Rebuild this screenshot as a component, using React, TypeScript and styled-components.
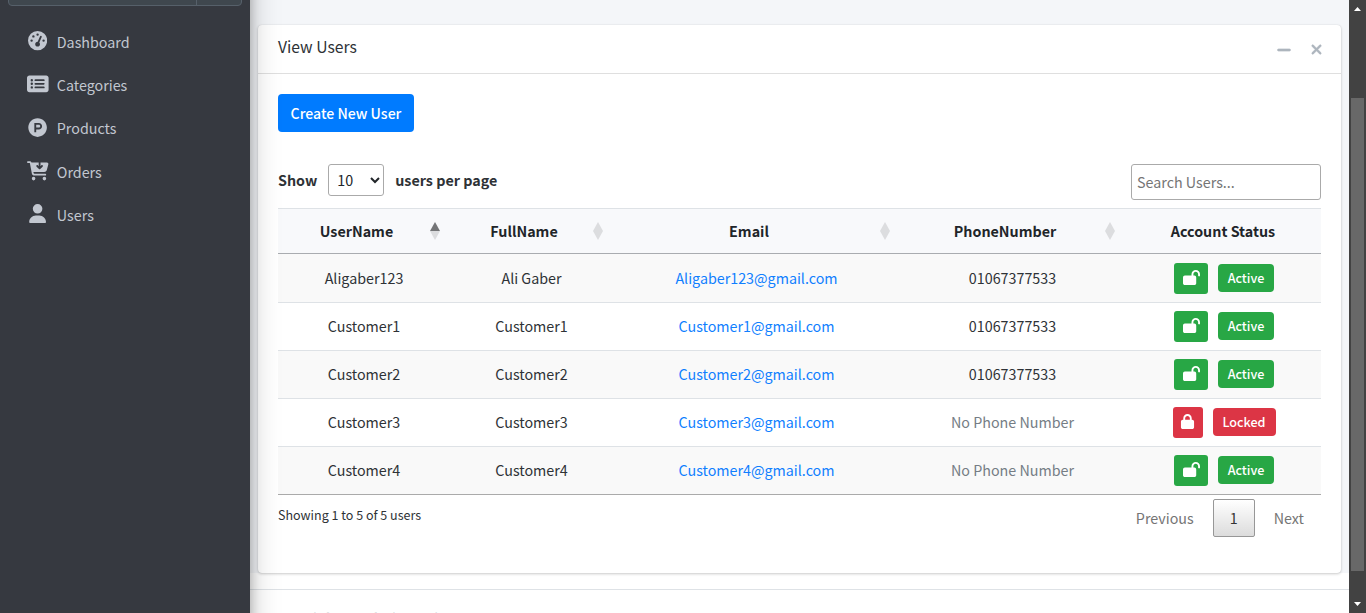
import React from "react";
import styled, { createGlobalStyle } from "styled-components";
import {
  FaGaugeHigh,
  FaRectangleList,
  FaProductHunt,
  FaCartArrowDown,
  FaUser,
  FaLock,
  FaLockOpen,
  FaMinus,
  FaXmark,
} from "react-icons/fa6";

const GlobalStyle = createGlobalStyle`
  *, *::before, *::after { box-sizing: border-box; }
  html, body { margin: 0; height: 613px; overflow: hidden; }
  body {
    font-family: "Noto Sans CJK SC", "Noto Sans", sans-serif;
    font-size: 14.3px;
    line-height: 24px;
    color: #2e3236;
    background: #fff;
  }
  button, input, select { font: inherit; }
`;

const Shell = styled.div`
  display: flex;
  height: 613px;
  overflow: hidden;
`;

const Sidebar = styled.aside`
  flex: 0 0 250px;
  height: 773px;
  margin-top: -80px;
  padding: 54px 8px 0;
  background: #363940;
  box-shadow: 0 14px 28px rgba(0, 0, 0, 0.25), 0 10px 10px rgba(0, 0, 0, 0.22);
  z-index: 2;
`;

const SidebarSearch = styled.div`
  display: flex;
  width: 234px;
  height: 32px;
  border: 1px solid #56606a;
  border-radius: 4px;
  background: #3f474e;
`;

const SearchField = styled.div`
  flex: 1;
`;

const SearchButton = styled.div`
  width: 45px;
  border-left: 1px solid #56606a;
`;

const Nav = styled.nav`
  margin-top: 16px;
`;

const NavLink = styled.a`
  display: flex;
  align-items: center;
  height: 40px;
  margin-bottom: 3.2px;
  padding-left: 17px;
  color: #c2c7d0;
  text-decoration: none;
`;

const NavIcon = styled.span<{ $wide?: boolean }>`
  display: flex;
  justify-content: center;
  width: 25.6px;
  margin-right: 6.2px;
  padding-bottom: 2px;
  svg {
    display: block;
    flex: none;
    width: ${(p) => (p.$wide ? 21.6 : 19.2)}px;
    height: ${(p) => (p.$wide ? 21.6 : 19.2)}px;
  }
`;

const Main = styled.main`
  flex: 1;
  min-width: 0;
  display: flex;
  flex-direction: column;
`;

const Content = styled.section`
  display: flex;
  flex-direction: column;
  height: 573px;
  padding: 0 8px;
  background: #f4f6f9;
`;

const PageHeading = styled.h1`
  height: 54px;
  margin: -29px 0 0;
  padding-left: 7px;
  font-size: 25.8px;
  font-weight: 400;
  line-height: 24px;
`;

const Card = styled.div`
  height: 548px;
  background: #fff;
  border-radius: 4px;
  box-shadow: 0 0 1px rgba(0, 0, 0, 0.13), 0 1px 3px rgba(0, 0, 0, 0.2);
`;

const CardHeader = styled.header`
  display: flex;
  justify-content: space-between;
  height: 49px;
  padding: 10px 17px 0 20px;
  border-bottom: 1px solid rgba(0, 0, 0, 0.125);
`;

const CardTitle = styled.h3`
  margin: 0;
  font-size: 15.7px;
  font-weight: 400;
  line-height: 24px;
`;

const CardTools = styled.div`
  display: flex;
  gap: 17px;
  align-items: center;
  height: 29px;
  color: #adb5bd;
  svg { stroke: currentColor; stroke-width: 22px; }
`;

const CardBody = styled.div`
  padding: 20px 20px 0;
`;

const PrimaryButton = styled.button`
  display: block;
  width: 136px;
  height: 38px;
  padding: 0;
  border: 0;
  border-radius: 4px;
  background: #007bff;
  color: #fff;
  font-size: 14.1px;
  font-weight: 500;
`;

const Controls = styled.div`
  display: flex;
  justify-content: space-between;
  height: 44px;
  margin-top: 32px;
`;

const LengthLabel = styled.label`
  display: flex;
  align-items: center;
  height: 32px;
  font-weight: 700;
`;

const LengthSelect = styled.select`
  width: 56px;
  height: 32px;
  margin: 0 11px;
  padding: 3px 4px 5px;
  border: 1px solid #aaa;
  border-radius: 3px;
  background: transparent;
  color: #212529;
  font-weight: 400;
`;

const SearchInput = styled.input`
  width: 190px;
  height: 36px;
  padding: 4px 5px 6px;
  border: 1px solid #aaa;
  border-radius: 3px;
  background: transparent;
  &::placeholder { color: #757575; }
`;

const Table = styled.table`
  width: 1043px;
  table-layout: fixed;
  border-collapse: separate;
  border-spacing: 0;
  border-bottom: 1px solid #aaa;
  text-align: center;
`;

const HeadCell = styled.th<{ $sortable?: boolean }>`
  position: relative;
  height: 46px;
  padding: 0 ${(p) => (p.$sortable ? 15 : 0)}px 0 0;
  border-top: 1px solid #dee2e6;
  border-bottom: 1px solid #a9acb0;
  background: #f8f9fb;
  color: #212529;
  font-weight: 700;
`;

const SortMark = styled.svg`
  position: absolute;
  right: 10px;
  top: 13px;
`;

const Row = styled.tr`
  &:nth-child(odd) { background: #f9f9f9; }
  &:not(:first-child) td {
    padding-bottom: 1px;
    border-top: 1px solid #dee2e6;
  }
`;

const Cell = styled.td<{ $muted?: boolean }>`
  height: 48px;
  padding: 0;
  color: ${(p) => (p.$muted ? "#757d85" : "#2e3236")};
`;

const MailLink = styled.a`
  color: #107fff;
  text-decoration: none;
`;

const Status = styled.div`
  display: flex;
  align-items: center;
  justify-content: center;
  gap: 10px;
  height: 31px;
  padding-left: 2px;
`;

const LockButton = styled.button<{ $locked: boolean }>`
  display: flex;
  align-items: center;
  justify-content: center;
  width: ${(p) => (p.$locked ? 30 : 34)}px;
  height: 31px;
  padding: 0 0 1px;
  border: 0;
  border-radius: 3px;
  color: #fff;
  background: ${(p) => (p.$locked ? "#dc3545" : "#28a745")};
`;

const Badge = styled.span<{ $locked: boolean }>`
  width: ${(p) => (p.$locked ? 63 : 56)}px;
  height: 28px;
  margin-bottom: 1px;
  border-radius: 4px;
  color: #fff;
  font-size: 12.6px;
  font-weight: 500;
  line-height: 28px;
  background: ${(p) => (p.$locked ? "#dc3545" : "#28a745")};
`;

const TableFooter = styled.div`
  display: flex;
  justify-content: space-between;
  padding-top: 4px;
`;

const Info = styled.div`
  padding-top: 4px;
  font-size: 12.5px;
`;

const Pager = styled.div`
  display: flex;
  align-items: center;
  height: 38px;
  padding-right: 17px;
  color: #757575;
`;

const PageNumber = styled.span`
  width: 42px;
  height: 38px;
  margin: 0 19px;
  border: 1px solid #979797;
  border-radius: 2px;
  background: linear-gradient(#fff, #dcdcdc);
  color: #333;
  line-height: 36px;
  text-align: center;
`;

const Footer = styled.footer`
  height: 24px;
  margin-top: 16px;
  padding: 16px 16px 0 21px;
  border-top: 1px solid #dee2e6;
  color: #869099;
  font-weight: 700;
  overflow: hidden;
  white-space: nowrap;
`;

const Scrollbar = styled.div`
  display: flex;
  flex-direction: column;
  align-items: center;
  flex: 0 0 17px;
  height: 613px;
  background: #424242;
`;

const ScrollArrow = styled.svg`
  display: block;
  flex: none;
`;

const Thumb = styled.div`
  width: 13px;
  height: 473px;
  margin: 81px 0 25px;
  background: #686868;
`;

const navItems = [
  { label: "Dashboard", icon: <FaGaugeHigh /> },
  { label: "Categories", icon: <FaRectangleList />, wide: true },
  { label: "Products", icon: <FaProductHunt /> },
  { label: "Orders", icon: <FaCartArrowDown />, wide: true },
  { label: "Users", icon: <FaUser /> },
];

const columns = [
  { label: "UserName", width: 172 },
  { label: "FullName", width: 163 },
  { label: "Email", width: 287 },
  { label: "PhoneNumber", width: 225 },
  { label: "Account Status", width: 196 },
];

const users = [
  { user: "Aligaber123", name: "Ali Gaber", phone: "01067377533", locked: false },
  { user: "Customer1", name: "Customer1", phone: "01067377533", locked: false },
  { user: "Customer2", name: "Customer2", phone: "01067377533", locked: false },
  { user: "Customer3", name: "Customer3", phone: "", locked: true },
  { user: "Customer4", name: "Customer4", phone: "", locked: false },
];

export default function App() {
  return (
    <>
      <GlobalStyle />
      <Shell>
        <Sidebar>
          <SidebarSearch>
            <SearchField />
            <SearchButton />
          </SidebarSearch>
          <Nav>
            {navItems.map((item) => (
              <NavLink key={item.label}>
                <NavIcon $wide={item.wide}>{item.icon}</NavIcon>
                {item.label}
              </NavLink>
            ))}
          </Nav>
        </Sidebar>
        <Main>
          <Content>
            <PageHeading>Users Management</PageHeading>
            <Card>
              <CardHeader>
                <CardTitle>View Users</CardTitle>
                <CardTools>
                  <FaMinus size={16} />
                  <FaXmark size={15} />
                </CardTools>
              </CardHeader>
              <CardBody>
                <PrimaryButton>Create New User</PrimaryButton>
                <Controls>
                  <LengthLabel>
                    Show
                    <LengthSelect defaultValue="10">
                      <option>10</option>
                    </LengthSelect>
                    users per page
                  </LengthLabel>
                  <SearchInput placeholder="Search Users..." />
                </Controls>
                <Table>
                  <colgroup>
                    {columns.map((c) => (
                      <col key={c.label} width={c.width} />
                    ))}
                  </colgroup>
                  <thead>
                    <tr>
                      {columns.map((c, i) => (
                        <HeadCell key={c.label} $sortable={i < 4}>
                          {c.label}
                          {i < 4 && (
                            <SortMark width="10" height="18" viewBox="0 0 10 18">
                              <path d="M5 0L10 9H0Z" fill={i === 0 ? "#747577" : "#dcdddf"} />
                              <path d="M0 9H10L5 18Z" fill="#dcdddf" />
                            </SortMark>
                          )}
                        </HeadCell>
                      ))}
                    </tr>
                  </thead>
                  <tbody>
                    {users.map((u) => (
                      <Row key={u.user}>
                        <Cell>{u.user}</Cell>
                        <Cell>{u.name}</Cell>
                        <Cell>
                          <MailLink>{u.user}@gmail.com</MailLink>
                        </Cell>
                        <Cell $muted={!u.phone}>{u.phone || "No Phone Number"}</Cell>
                        <Cell>
                          <Status>
                            <LockButton $locked={u.locked}>
                              {u.locked ? <FaLock size={15} /> : <FaLockOpen size={17} />}
                            </LockButton>
                            <Badge $locked={u.locked}>{u.locked ? "Locked" : "Active"}</Badge>
                          </Status>
                        </Cell>
                      </Row>
                    ))}
                  </tbody>
                </Table>
                <TableFooter>
                  <Info>Showing 1 to 5 of 5 users</Info>
                  <Pager>
                    Previous
                    <PageNumber>1</PageNumber>
                    Next
                  </Pager>
                </TableFooter>
              </CardBody>
            </Card>
          </Content>
          <Footer>Copyright © AdminLTE.io</Footer>
        </Main>
        <Scrollbar>
          <ScrollArrow width="17" height="17" viewBox="0 0 17 17">
            <path d="M5 11L8.5 7L12 11Z" fill="#fff" />
          </ScrollArrow>
          <Thumb />
          <ScrollArrow width="17" height="17" viewBox="0 0 17 17">
            <path d="M5 6L8.5 10L12 6Z" fill="#fff" />
          </ScrollArrow>
        </Scrollbar>
      </Shell>
    </>
  );
}
